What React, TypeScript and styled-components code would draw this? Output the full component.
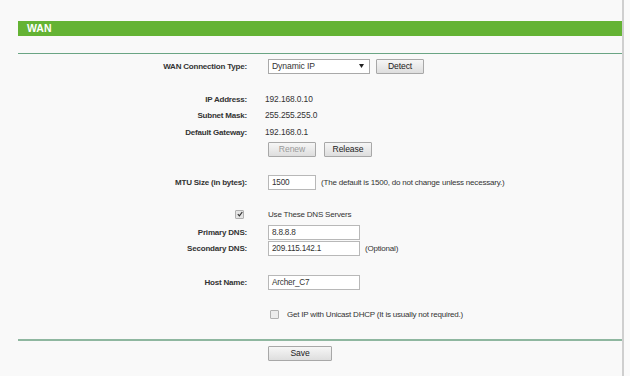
import React from "react";
import styled, { createGlobalStyle } from "styled-components";

const Global = createGlobalStyle`
  html, body { margin: 0; padding: 0; background: #fafafa; }
  body { font-family: "Liberation Sans", Arial, sans-serif; }
`;

const Frame = styled.div`
  width: 624px;
  height: 376px;
  border-right: 2px solid #cfcfcf;
  background: #f9f9f9;
  padding: 21px 0 0 18px;
  box-sizing: border-box;
  font-family: "Liberation Sans", Arial, sans-serif;
  font-size: 8px;
  letter-spacing: -0.2px;
  color: #333;
`;

const Header = styled.div`
  height: 15px;
  background: #64b334;
  color: #fff;
  font-weight: bold;
  font-size: 10.5px;
  letter-spacing: 0;
  line-height: 15px;
  padding-left: 9px;
`;

const Divider = styled.div<{ $thick?: boolean; $mt: number }>`
  margin-top: ${(p) => p.$mt}px;
  height: ${(p) => (p.$thick ? 2 : 1)}px;
  background: ${(p) => (p.$thick ? "#8fb7a0" : "#6aa584")};
`;

const Row = styled.div<{ $mt?: number }>`
  display: grid;
  grid-template-columns: 229px 1fr;
  column-gap: 21px;
  align-items: center;
  height: 16px;
  margin-top: ${(p) => p.$mt ?? 0}px;
`;

const Label = styled.div`
  text-align: right;
  font-weight: bold;
  color: #333;
  white-space: nowrap;
`;

const CheckCell = styled.div`
  display: flex;
  justify-content: flex-end;
  padding-right: 3px;
`;

const Value = styled.div`
  display: flex;
  align-items: center;
  gap: 6px;
  white-space: nowrap;
`;

const Plain = styled.div`
  margin-left: -3px;
  font-size: 8.4px;
  letter-spacing: -0.1px;
`;

const Select = styled.div`
  width: 102px;
  height: 15px;
  box-sizing: border-box;
  border: 1px solid #a9a9a9;
  background: #fff;
  display: flex;
  align-items: center;
  justify-content: space-between;
  padding: 0 5px 0 3px;
  font-size: 8.6px;
  letter-spacing: -0.1px;
`;

const Button = styled.div<{ $w: number; $disabled?: boolean }>`
  width: ${(p) => p.$w}px;
  height: 15px;
  box-sizing: border-box;
  border: 1px solid #a8a8a8;
  border-radius: 1px;
  background: linear-gradient(#f6f6f6, #dedede);
  color: ${(p) => (p.$disabled ? "#9a9a9a" : "#222")};
  display: flex;
  align-items: center;
  justify-content: center;
  font-size: 8.6px;
  letter-spacing: -0.1px;
`;

const Input = styled.div<{ $w: number }>`
  width: ${(p) => p.$w}px;
  height: 15px;
  box-sizing: border-box;
  border: 1px solid #b8b8b8;
  background: #fff;
  display: flex;
  align-items: center;
  padding-left: 3px;
  font-size: 8.2px;
`;

const Note = styled.span`
  margin-left: -1px;
  color: #333;
`;

const Box = styled.div<{ $checked?: boolean }>`
  width: 7px;
  height: 7px;
  border: 1px solid #b0b0b0;
  border-radius: 1px;
  background: ${(p) => (p.$checked ? "#e4e4e4" : "#ececec")};
  display: flex;
  align-items: center;
  justify-content: center;
`;

const CheckText = styled.span<{ $ml: number }>`
  margin-left: ${(p) => p.$ml}px;
`;

const CheckLine = styled.div`
  display: flex;
  align-items: center;
  padding-left: 2px;
`;

const Check = () => (
  <svg width="6" height="6" viewBox="0 0 6 6">
    <path d="M0.8 3.2 L2.4 4.8 L5.3 1" stroke="#333" strokeWidth="1.2" fill="none" />
  </svg>
);

export default function App() {
  return (
    <>
      <Global />
      <Frame>
        <Header>WAN</Header>
        <Divider $mt={17} />
        <Row $mt={4}>
          <Label>WAN Connection Type:</Label>
          <Value>
            <Select>
              <span>Dynamic IP</span>
              <svg width="5" height="4" viewBox="0 0 5 4">
                <path d="M0 0 H5 L2.5 4 Z" fill="#222" />
              </svg>
            </Select>
            <Button $w={48}>Detect</Button>
          </Value>
        </Row>
        <Row $mt={17}>
          <Label>IP Address:</Label>
          <Plain>192.168.0.10</Plain>
        </Row>
        <Row>
          <Label>Subnet Mask:</Label>
          <Plain>255.255.255.0</Plain>
        </Row>
        <Row $mt={1}>
          <Label>Default Gateway:</Label>
          <Plain>192.168.0.1</Plain>
        </Row>
        <Row $mt={1}>
          <div />
          <Value style={{ gap: 8 }}>
            <Button $w={48} $disabled>Renew</Button>
            <Button $w={48}>Release</Button>
          </Value>
        </Row>
        <Row $mt={17}>
          <Label>MTU Size (in bytes):</Label>
          <Value>
            <Input $w={48}>1500</Input>
            <Note>(The default is 1500, do not change unless necessary.)</Note>
          </Value>
        </Row>
        <Row $mt={16}>
          <CheckCell>
            <Box $checked>
              <Check />
            </Box>
          </CheckCell>
          <Value>Use These DNS Servers</Value>
        </Row>
        <Row $mt={2}>
          <Label>Primary DNS:</Label>
          <Value>
            <Input $w={92}>8.8.8.8</Input>
          </Value>
        </Row>
        <Row>
          <Label>Secondary DNS:</Label>
          <Value>
            <Input $w={92}>209.115.142.1</Input>
            <Note>(Optional)</Note>
          </Value>
        </Row>
        <Row $mt={18}>
          <Label>Host Name:</Label>
          <Value>
            <Input $w={92}>Archer_C7</Input>
          </Value>
        </Row>
        <Row $mt={16}>
          <div />
          <CheckLine>
            <Box />
            <CheckText $ml={8}>Get IP with Unicast DHCP (It is usually not required.)</CheckText>
          </CheckLine>
        </Row>
        <Divider $thick $mt={17} />
        <Row $mt={4}>
          <div />
          <Value>
            <Button $w={64}>Save</Button>
          </Value>
        </Row>
      </Frame>
    </>
  );
}
